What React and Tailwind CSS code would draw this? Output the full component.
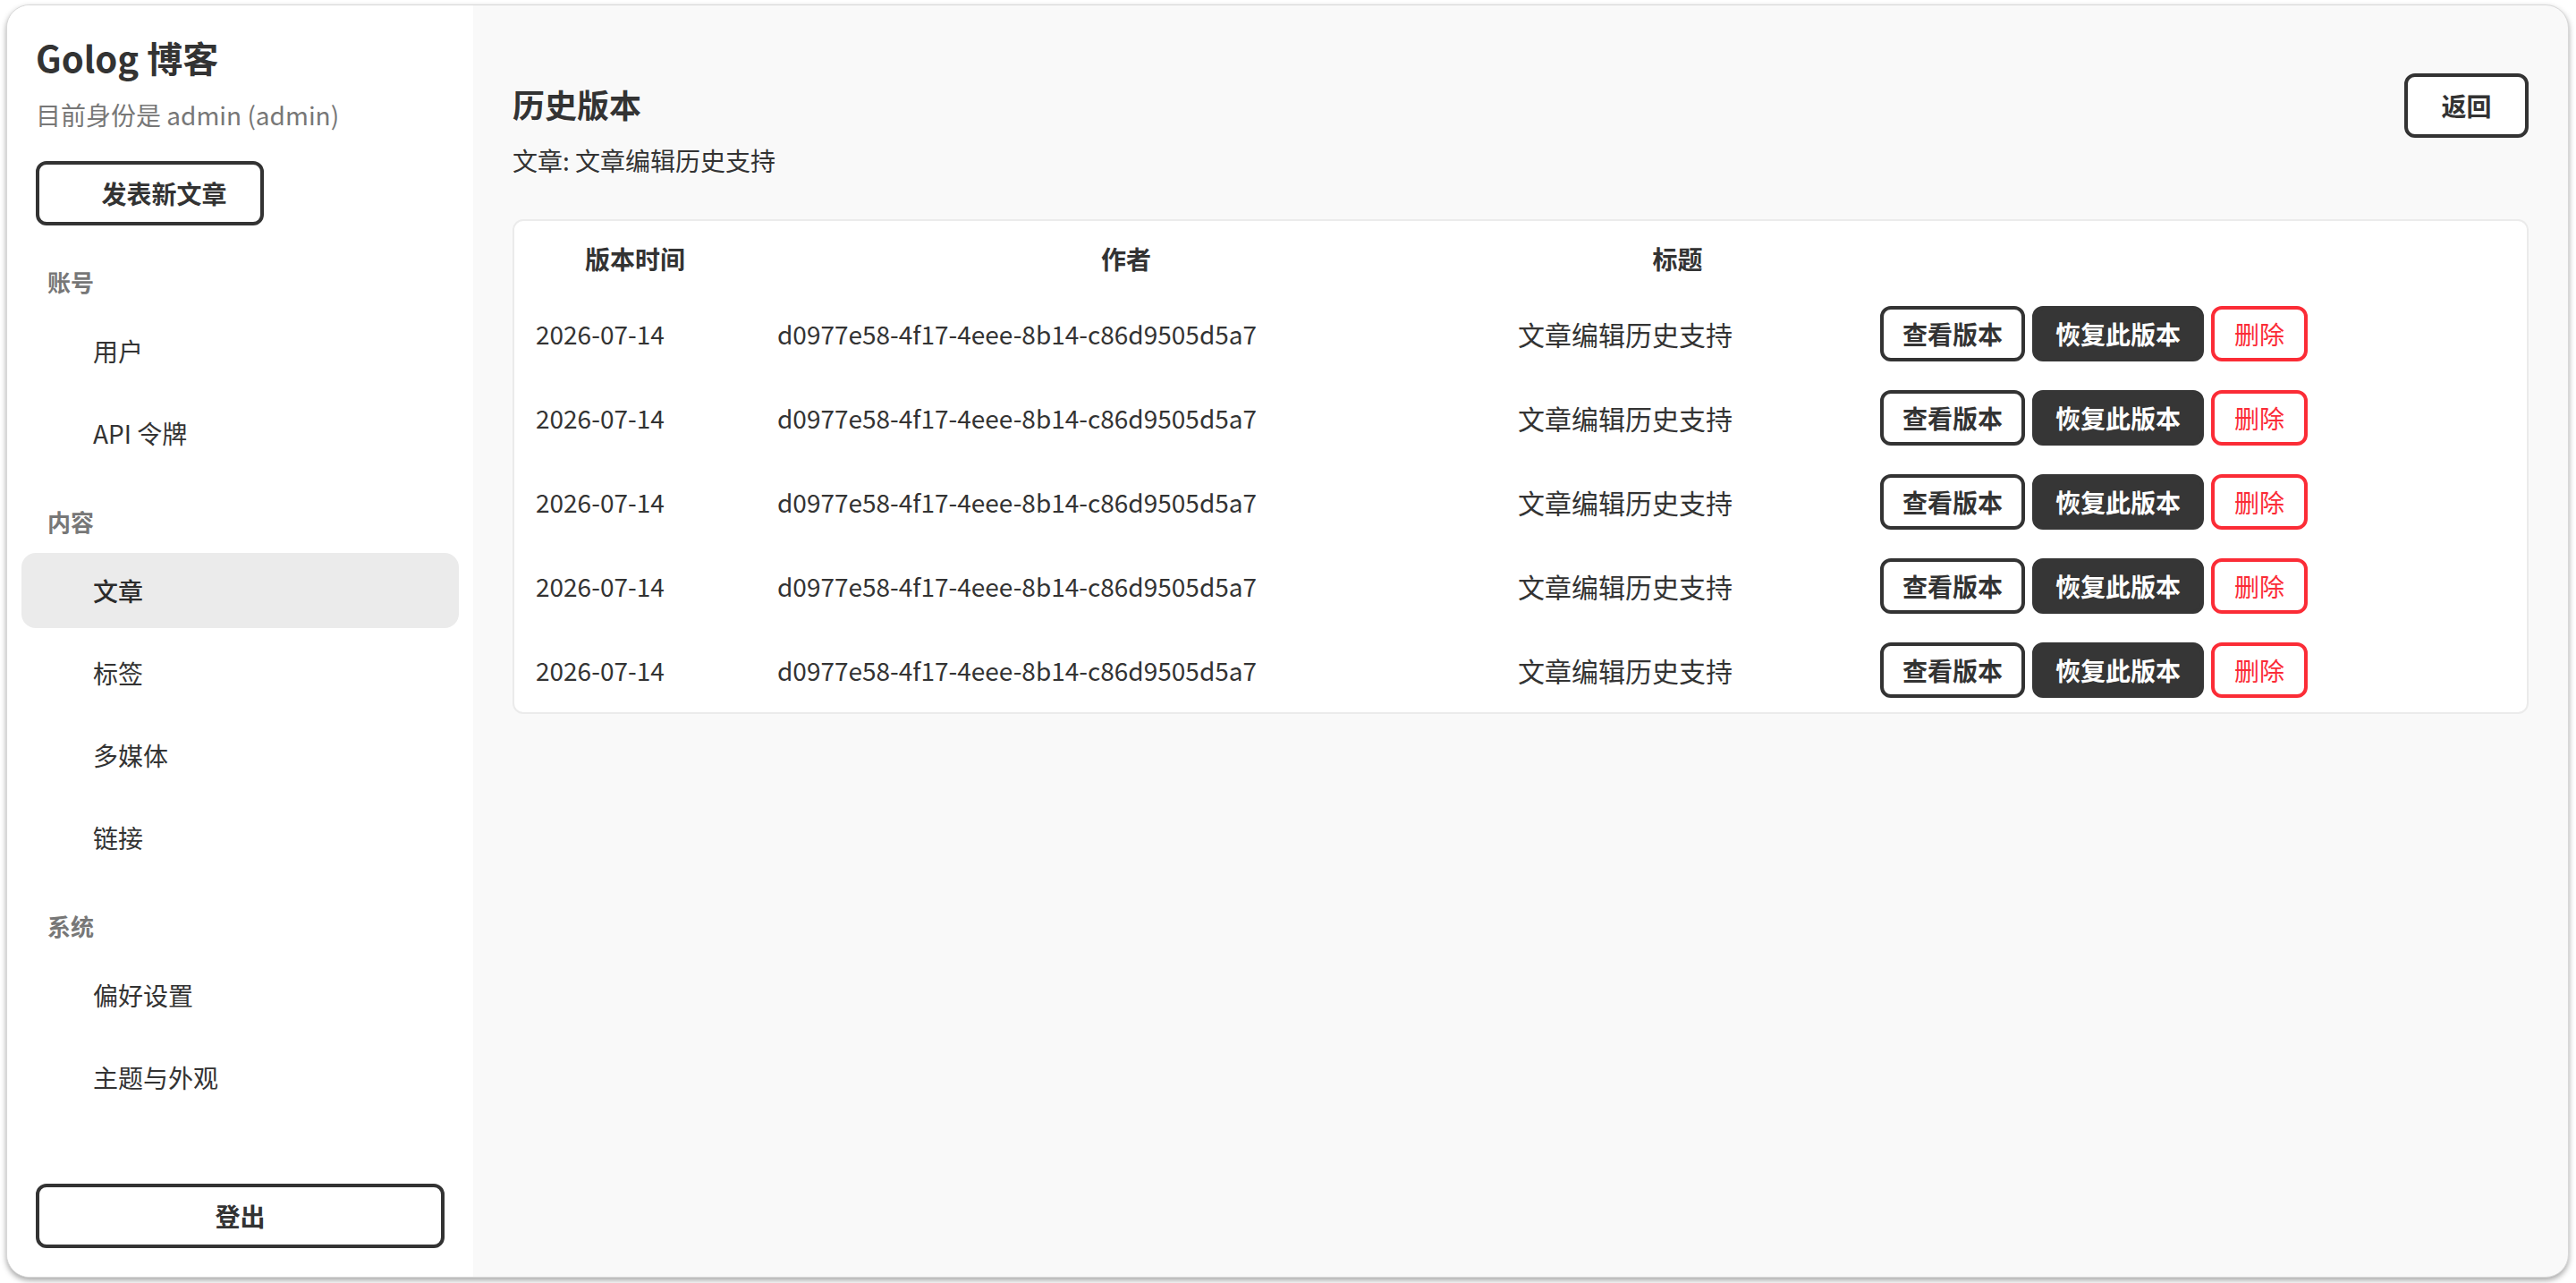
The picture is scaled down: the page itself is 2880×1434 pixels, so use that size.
import React from "react";

const rows = Array.from({ length: 5 }, () => ({
  time: "2026-07-14",
  author: "d0977e58-4f17-4eee-8b14-c86d9505d5a7",
  title: "文章编辑历史支持",
}));

function NavLabel({ children }) {
  return (
    <div className="h-10 flex items-center pl-[29px] text-[26px] font-semibold text-[#777777] mb-4">
      {children}
    </div>
  );
}

function NavItem({ children, active }) {
  return (
    <div
      className={
        active
          ? "h-[84px] flex items-center pl-20 rounded-[16px] bg-[#ebebeb] text-[28px] font-medium text-[#2b2b2b]"
          : "h-[84px] flex items-center pl-20 rounded-[16px] text-[28px] text-[#333333]"
      }
    >
      {children}
    </div>
  );
}

export default function App() {
  return (
    <div className="h-[1434px] w-[2880px] bg-white pt-[5px] pl-[7px] pr-[8px] pb-[6px] font-['Noto_Sans_CJK_SC',sans-serif] text-[#333333]">
      <div className="h-full flex rounded-[26px] border border-[#d8d8d8] overflow-hidden bg-[#f9f9f9] shadow-[0_3px_6px_rgba(0,0,0,0.35)]">
        {/* Sidebar */}
        <aside className="w-[521px] shrink-0 bg-white flex flex-col">
          <div className="px-8 pt-[30px]">
            <div className="h-[56px] leading-[56px] text-[40px] font-bold text-[#333333]">
              Golog 博客
            </div>
            <div className="mt-4 h-10 leading-[40px] text-[28px] text-[#777777]">
              目前身份是 admin (admin)
            </div>
            <button className="mt-8 w-[255px] h-[72px] rounded-[12px] border-4 border-[#333333] bg-white flex items-center justify-center pl-[32px] text-[28px] font-bold text-[#333333]">
              发表新文章
            </button>
          </div>

          <nav className="flex-1 px-4 mt-[42px]">
            <NavLabel>账号</NavLabel>
            <div className="flex flex-col gap-2">
              <NavItem>用户</NavItem>
              <NavItem>API 令牌</NavItem>
            </div>

            <div className="mt-9">
              <NavLabel>内容</NavLabel>
              <div className="flex flex-col gap-2">
                <NavItem active>文章</NavItem>
                <NavItem>标签</NavItem>
                <NavItem>多媒体</NavItem>
                <NavItem>链接</NavItem>
              </div>
            </div>

            <div className="mt-9">
              <NavLabel>系统</NavLabel>
              <div className="flex flex-col gap-2">
                <NavItem>偏好设置</NavItem>
                <NavItem>主题与外观</NavItem>
              </div>
            </div>
          </nav>

          <div className="px-8 pb-8">
            <button className="w-full h-[72px] rounded-[12px] border-4 border-[#333333] bg-white flex items-center justify-center text-[28px] font-bold text-[#333333]">
              登出
            </button>
          </div>
        </aside>

        {/* Main */}
        <main className="flex-1 px-11 pt-[76px]">
          <div className="flex justify-between items-start">
            <div className="pt-[10px]">
              <h1 className="h-[48px] leading-[48px] text-[36px] font-bold text-[#333333]">
                历史版本
              </h1>
              <div className="mt-[19px] h-10 leading-[40px] text-[28px] text-[#333333]">
                文章: 文章编辑历史支持
              </div>
            </div>
            <button className="w-[139px] h-[72px] rounded-[12px] border-4 border-[#333333] bg-white flex items-center justify-center text-[28px] font-bold text-[#333333]">
              返回
            </button>
          </div>

          <div className="mt-[46px] bg-white border-2 border-[#ebebeb] rounded-[12px] overflow-hidden">
            <table className="w-full table-fixed border-collapse">
              <colgroup>
                <col className="w-[270px]" />
                <col className="w-[828px]" />
                <col className="w-[405px]" />
                <col />
              </colgroup>
              <thead>
                <tr className="h-[79px]">
                  <th className="px-6 pt-[4px] text-center text-[28px] font-bold text-[#333333]">版本时间</th>
                  <th className="px-6 pt-[4px] text-center text-[28px] font-bold text-[#333333]">作者</th>
                  <th className="px-6 pt-[4px] text-center text-[28px] font-bold text-[#333333]">标题</th>
                  <th className="px-6"></th>
                </tr>
              </thead>
              <tbody>
                {rows.map((r, i) => (
                  <tr key={i} className="h-[94px]">
                    <td className="px-6 text-left text-[28px] text-[#333333] whitespace-nowrap">{r.time}</td>
                    <td className="px-6 text-left text-[28px] text-[#333333] whitespace-nowrap">{r.author}</td>
                    <td className="px-6 text-left text-[30px] text-[#333333] whitespace-nowrap">{r.title}</td>
                    <td className="px-6">
                      <div className="flex items-center gap-2">
                        <button className="h-[62px] px-[21px] rounded-[12px] border-4 border-[#333333] bg-white text-[28px] font-bold text-[#333333] whitespace-nowrap">
                          查看版本
                        </button>
                        <button className="h-[62px] px-[22px] rounded-[12px] border-4 border-[#363636] bg-[#363636] text-[28px] font-bold text-white whitespace-nowrap">
                          恢复此版本
                        </button>
                        <button className="h-[62px] px-[22px] rounded-[12px] border-4 border-[#fb2c36] bg-white text-[28px] text-[#fb2c36] whitespace-nowrap">
                          删除
                        </button>
                      </div>
                    </td>
                  </tr>
                ))}
              </tbody>
            </table>
          </div>
        </main>
      </div>
    </div>
  );
}
